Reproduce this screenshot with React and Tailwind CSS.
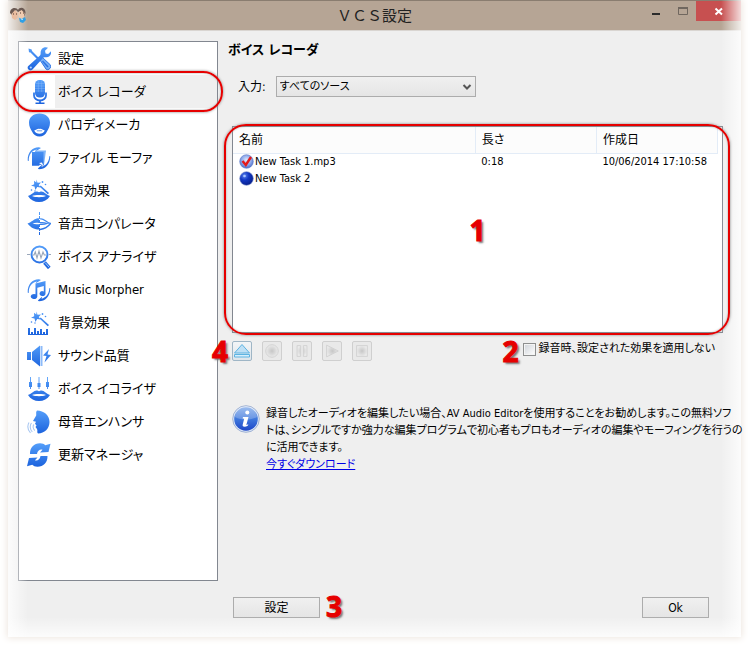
import React, { useState } from "react";

const BLUE = "url(#blue)";

const Lips = ({ y = 0 }) => (
  <g transform={`translate(0 ${y})`}>
    <path
      d="M1 17C4 16 7 12.500 9.500 12.500c1.200 0 1.800.7 2.500.7s1.300-.7 2.500-.7c2.500 0 5.500 3.500 8.500 4.500C20.500 21 16.500 23 12 23S3.500 21 1 17Z"
      fill={BLUE}
    />
    <path d="M5 17c3-1.400 11-1.400 14 0-3 1.600-11 1.600-14 0Z" fill="#fff" />
  </g>
);

const Arcs = () => (
  <g fill={BLUE}>
    <path d="M12 1.200C5.500 1 .5 6 .7 14.500c.3.8 1 .5 1-.1C1.800 8.500 5 4.500 9.800 3.500L8.500 5.600 14 2Z" />
    <path d="M12 23.300c6 0 11-4.500 11.300-12.800-.2-.9-1-.6-1 0-.3 5.500-3.300 9-7.800 10.200l.8-2.200-4.500 4Z" />
  </g>
);

const Wand = () => (
  <g fill={BLUE}>
    <path d="m9.500.5 1 3.300 3.500-.4-2.300 2.600 2 2.600-3.500-.5-1.800 3L7.500 7.600 4 6.800l3.200-1.600L7 1.700l2.300 1.800Z" />
    <path d="m12.500 7.500 1.200-1 8.300 7.500-1.200 1.200Z" />
    <circle cx="15.500" cy="3" r=".9" />
    <circle cx="18.500" cy="5.500" r=".8" />
    <circle cx="4.500" cy="11" r=".8" />
    <circle cx="8" cy="12" r=".7" />
  </g>
);

const icons = {
  tools: (
    <>
      <path d="m1.500 1.500 3.200 1L5 4l7 7-1.500 1.500-7-7-1.500-.3Z" fill={BLUE} />
      <path
        d="m13 13 2.500-2.500 8 7.500c1.500 2-1.800 6-4.300 4.300Z"
        fill="#78aff5"
        stroke={BLUE}
      />
      <path d="m15.500 14 5.500 6" stroke={BLUE} strokeWidth="1.500" />
      <path
        d="M16.500.8c1.700-.7 3.500-.5 4.500 0l-3 3 .6 2.600 2.600.6L24 4.200c.8 3-1.300 6.500-5.500 6-1 0-1.700 0-2.500.8L5.500 22.500c-2.500 2.500-6.500-.8-4.200-3.500L13 8.500c.8-.8.6-1.500.6-2.700 0-2.200 1-4.200 2.900-5Z"
        fill={BLUE}
      />
      <circle cx="3.800" cy="20.500" r="1.100" fill="#b9d7fb" />
    </>
  ),
  mic: (
    <>
      <rect x="8" y="0" width="10" height="17.500" rx="4.500" fill={BLUE} />
      <path
        d="M8.500 3.500h9M8 6h10M8 8.500h10M8 11h10M11.300 1v11M14.700 1v11"
        stroke="#8fc1fb"
        strokeWidth=".4"
      />
      <path
        d="M7 12.500v3a6 5 0 0 0 12 0v-3M13 20v3M8.500 23.300h9"
        stroke={BLUE}
        strokeWidth="1.800"
      />
    </>
  ),
  face: (
    <>
      <path
        d="M12.500.5C19 .5 23 4.500 23 9.500c0 4-1.500 6.500-3 9-1.500 3.200-4.300 5-7.500 5s-6-1.800-7.500-5c-1.500-2.500-3-5-3-9C2 4.500 6 .5 12.500.5Z"
        fill={BLUE}
      />
      <path
        d="M7.200 17.500c2-.5 3.300-2.200 5.300-1.600 2-.6 3.300 1.100 5.300 1.600-2 4.300-8.600 4.300-10.600 0Z"
        fill="#fff"
      />
      <path d="M9.800 17.800h5.400" stroke={BLUE} strokeWidth=".7" />
    </>
  ),
  file: (
    <>
      <Arcs />
      <path d="M8 4.500h11l-2 14.500H8Z" fill="#7db3f8" />
      <path d="M5 6h11.500v14L13 18.500l-1 1.300H5Z" fill={BLUE} />
      <path d="m12 17 3-.5 1.500 3.500Z" fill="#fff" />
    </>
  ),
  wandLips: (
    <>
      <Wand />
      <Lips />
    </>
  ),
  compare: (
    <>
      <path
        d="M12 6.500C9 5 5 10 .5 11.500 4 16 8 17.500 12 17.500v-5.300c-2 0-4.500.3-6.500-.7 2-.8 4.500-.8 6.500-.5Z"
        fill={BLUE}
      />
      <path
        d="M13 7c3-1.500 6.500 3.500 10.500 4.500C20.500 15.500 17 17 13 17.500M13 10.700c2-.2 5 0 7 .8-2 .8-5 1-7 .8"
        stroke={BLUE}
        strokeWidth="1.300"
      />
      <path d="M12.500 0v24" stroke={BLUE} strokeDasharray="3 1" />
    </>
  ),
  analyzer: (
    <>
      <circle cx="12.500" cy="9.500" r="8" stroke={BLUE} strokeWidth="2" />
      <path
        d="M0 9.500h3M22 9.500h2M5.500 10H7l1.300-3 1.700 6 2-7 2 7 2-6 1.300 3h2"
        stroke="#9aa7ba"
        strokeWidth="1.100"
      />
      <path d="m17.500 17.500 4.800 5.500" stroke={BLUE} strokeWidth="3.500" />
      <path d="m18.300 17.800 3.700 4.300" stroke="#9bc4f8" />
    </>
  ),
  music: (
    <>
      <Arcs />
      <path
        d="M8.500 5.500 18.500 3v12.500a3 2.400 0 1 1-1.700-2V8l-6.500 1.800v8.700a3.300 2.500 0 1 1-1.800-2.200Z"
        fill={BLUE}
      />
    </>
  ),
  background: (
    <>
      <Wand />
      <path
        d="M2 24v-7M5 24v-3M8 24v-7M11 24v-4M14 24v-6M17 24v-3M20 24v-6"
        stroke={BLUE}
        strokeWidth="2"
      />
      <path d="M1 23.500h20" stroke={BLUE} />
    </>
  ),
  sound: (
    <>
      <path d="M0 8h4v8H0ZM5 8l8-6.500v21L5 16Z" fill={BLUE} />
      <path d="M14.500 2v20" stroke="#8dbbf9" strokeWidth="2" />
      <path d="m22 5-6 6.500 3.500.5-2 6.500L24 11l-3.500-.5Z" fill={BLUE} />
    </>
  ),
  equalizer: (
    <>
      <path d="M3.500 0v12M12 0v12M20.500 0v12" stroke={BLUE} strokeWidth=".9" />
      <path d="M2 5h3v5H2ZM10.500 6h3v4h-3ZM19 5h3v5h-3Z" fill={BLUE} />
      <Lips y={1} />
    </>
  ),
  vowel: (
    <>
      <path
        d="M10 .5C17 .5 22.500 5.500 22.500 12S17.500 23.500 11 23.500c-1.500-1.500 0-3-1-4.500l-1.500-2 1-1.500L8 13.700l1-1.900-3-.8 3.200-5.500C9.500 3.500 8.500 2 10 .5Z"
        fill={BLUE}
      />
      <path
        d="M7 14.500c-1.500 1.500-1 4.500.8 6M4.500 13c-2 2.500-1.500 6.500.8 8.800M2 12.500c-2 3.500-1 7.500 1.500 10.300"
        stroke="#a9c8f2"
        strokeWidth="1.100"
      />
    </>
  ),
  update: (
    <g fill={BLUE}>
      <path d="M3 11C2.800 4.500 7 .3 13 .3c2.500 0 4 .7 5.200 1.900L23.500.8 21.500 9 13 9.500l2.500-2.800C13 6 10.500 7.500 10 11Z" />
      <path d="M20.500 13c.2 6.500-4 10.700-10 10.700-2.500 0-4-.7-5.200-1.900L0 23.200 2 15l8.500-.5L8 17.300c2.500.7 5-.8 5.500-4.300Z" />
    </g>
  ),
};

const menu = [
  { icon: "tools", title: "設定" },
  { icon: "mic", title: "ボイス レコーダ" },
  { icon: "face", title: "パロディメーカ" },
  { icon: "file", title: "ファイル モーファ" },
  { icon: "wandLips", title: "音声効果" },
  { icon: "compare", title: "音声コンパレータ" },
  { icon: "analyzer", title: "ボイス アナライザ" },
  { icon: "music", title: "Music Morpher" },
  { icon: "background", title: "背景効果" },
  { icon: "sound", title: "サウンド品質" },
  { icon: "equalizer", title: "ボイス イコライザ" },
  { icon: "vowel", title: "母音エンハンサ" },
  { icon: "update", title: "更新マネージャ" },
];

const tasks = [
  { name: "New Task 1.mp3", length: "0:18", date: "10/06/2014 17:10:58", done: true },
  { name: "New Task 2", length: "", date: "", done: false },
];

const Gradients = () => (
  <svg className="absolute size-0" aria-hidden="true">
    <defs>
      <linearGradient id="blue" gradientUnits="userSpaceOnUse" x1="0" y1="0" x2="0" y2="24">
        <stop offset="0" stopColor="#559ffa" />
        <stop offset="1" stopColor="#1b62dd" />
      </linearGradient>
      <radialGradient id="ball" cx=".35" cy=".3" r=".8">
        <stop offset="0" stopColor="#5d86ee" />
        <stop offset=".4" stopColor="#1238c4" />
        <stop offset="1" stopColor="#061a80" />
      </radialGradient>
      <radialGradient id="ballDone" cx=".5" cy=".4" r=".7">
        <stop offset="0" stopColor="#e3ebff" />
        <stop offset=".5" stopColor="#8fa9ea" />
        <stop offset="1" stopColor="#2f52b8" />
      </radialGradient>
      <linearGradient id="info" x1="0" y1="0" x2="0" y2="1">
        <stop offset="0" stopColor="#7fa9ea" />
        <stop offset=".5" stopColor="#3f78dc" />
        <stop offset="1" stopColor="#1d46c8" />
      </linearGradient>
      <radialGradient id="grey">
        <stop offset="0" stopColor="#c6c6c6" />
        <stop offset="1" stopColor="#ebebeb" />
      </radialGradient>
    </defs>
  </svg>
);

const Mark = ({ children, className = "" }) => (
  <span
    className={`z-20 font-['Open_Sans',sans-serif] text-[28px] leading-6 font-bold text-[#e60000] [text-shadow:2px_2px_2px_#777] [-webkit-text-stroke:1px_#e60000] ${className}`}
  >
    {children}
  </span>
);

const Outline = ({ className }) => (
  <div
    className={`pointer-events-none absolute z-20 border-2 border-[#e60000] shadow-[0_0_2px_1px_#99999999,inset_0_0_2px_#999999] ${className}`}
  />
);

const TitleBar = () => (
  <header className="relative flex h-[31px] items-center justify-center border-t border-b border-t-[#8a7d70] border-b-[#d9d5d1] bg-[#b6a595]">
    <svg className="absolute top-1.5 left-0.5 z-20 size-4" viewBox="0 0 16 16" aria-hidden="true">
      <path d="M0 6c0-6 7-6 8-3 2-4 8-2 7.500 3l-1 3L11 4 8 5 6 3 2 8Z" fill="#6b5a53" />
      <path d="M1.500 7 5 3l3 3-.5 5L5 13l-3-2Z" fill="#e9bda0" />
      <path d="m8.500 5 3-2 3 3-.5 4-3 2-2.500-3Z" fill="#f0cbb0" />
      <path d="M3 7h1M6 7h1M10 6h1M13 6h1" stroke="#523b33" />
      <path d="m9 11 3 1 3-2 1 3-3 3-3-1Z" fill="#2fa0e6" />
      <path d="m11 12 2 .5" stroke="#b7e5ff" />
    </svg>
    <h1 className="text-[15px] leading-5 text-[#222] [font-feature-settings:normal]">ＶＣＳ設定</h1>
    <div className="absolute top-0 right-0 flex">
      <button type="button" aria-label="最小化" className="h-5 w-7">
        <svg width="28" height="20" viewBox="0 0 28 20" aria-hidden="true">
          <path d="M12 13h8" stroke="#2b2b2b" strokeWidth="2" />
        </svg>
      </button>
      <button type="button" aria-label="最大化" className="h-5 w-7">
        <svg width="28" height="20" viewBox="0 0 28 20" aria-hidden="true">
          <path d="M10 7h10" stroke="#70675f" strokeWidth="2" />
          <path d="M10.500 6.500h9v7h-9Z" fill="none" stroke="#70675f" />
        </svg>
      </button>
      <button type="button" aria-label="閉じる" className="h-5 w-[45px] bg-[#c75050]">
        <svg width="45" height="20" viewBox="0 0 45 20" aria-hidden="true">
          <path d="m19.500 7.500 6.500 6m0-6-6.500 6" stroke="#fff" strokeWidth="2" />
        </svg>
      </button>
    </div>
  </header>
);

const Sidebar = ({ active, onSelect }) => (
  <nav className="w-[200px] shrink-0 border border-[#828790] bg-white">
    <ul>
      {menu.map((item) => (
        <li key={item.icon} className="relative">
          <button
            type="button"
            aria-current={active === item.icon ? "page" : undefined}
            className="flex h-[33px] w-full items-center pl-2 text-left text-[13px]"
            onClick={() => onSelect(item.icon)}
          >
            <svg className="mr-1 size-6 shrink-0" viewBox="0 0 24 24" fill="none" aria-hidden="true">
              {icons[item.icon]}
            </svg>
            <span
              className={`flex h-full flex-1 items-center pl-[3px] whitespace-nowrap ${
                active === item.icon ? "bg-[#efefef]" : ""
              }`}
            >
              {item.title}
            </span>
          </button>
          {item.icon === "mic" && <Outline className="-inset-x-1.5 -top-1 -bottom-1 rounded-[20px]" />}
        </li>
      ))}
    </ul>
  </nav>
);

const TaskIcon = ({ done }) => (
  <svg className="size-4 shrink-0" viewBox="0 0 16 16" fill="none" aria-hidden="true">
    <circle cx="7.500" cy="7.500" r="6.800" fill={done ? "url(#ballDone)" : "url(#ball)"} stroke={done ? "#5a78c8" : "#7389c7"} strokeWidth=".6" />
    {done ? (
      <path d="m3.500 7 3.300 4L12 3" stroke="#e51a1a" strokeWidth="2.400" />
    ) : (
      <circle cx="5.500" cy="5" r="1.300" fill="#a9c6ff" />
    )}
  </svg>
);

const TaskTable = () => (
  <div className="relative">
    <div className="min-h-[207px] border border-[#828790] bg-white pr-1">
      <table className="w-full table-fixed border-collapse text-left text-[11px]">
        <thead>
          <tr className="h-[26px] border-b border-[#e3ecf7] bg-[#fcfcfc] text-xs">
            <th className="w-1/2 border-r border-[#e3ecf7] pl-1.5 font-normal">名前</th>
            <th className="w-1/4 border-r border-[#e3ecf7] pl-1.5 font-normal">長さ</th>
            <th className="w-1/4 border-r border-[#e3ecf7] pl-1.5 font-normal">作成日</th>
          </tr>
        </thead>
        <tbody>
          {tasks.map((task) => (
            <tr key={task.name} className="h-[17px]">
              <td className="p-0 pl-1.5">
                <div className="flex h-[17px] items-center whitespace-nowrap">
                  <TaskIcon done={task.done} />
                  {task.name}
                </div>
              </td>
              <td className="p-0 pl-1.5">{task.length}</td>
              <td className="p-0 pl-1.5 whitespace-nowrap">{task.date}</td>
            </tr>
          ))}
        </tbody>
      </table>
    </div>
    <Outline className="-inset-y-0.5 -right-[7px] -left-2 rounded-[22px]" />
    <Mark className="absolute top-1/2 left-1/2 -translate-x-1/2 -translate-y-1/2">1</Mark>
  </div>
);

const controls = [
  { label: "録音", shape: <circle cx="10" cy="10" r="7" /> },
  { label: "一時停止", shape: <path d="M4.500 4h4v12h-4ZM11.500 4h4v12h-4Z" /> },
  { label: "再生", shape: <path d="M4 3.500 17 10 4 16.500Z" /> },
  { label: "停止", shape: <path d="M4 4h12v12H4Z" /> },
];

const Toolbar = () => (
  <div className="relative flex gap-2.5">
    <Mark className="absolute -top-0.5 -left-5">4</Mark>
    <button
      type="button"
      aria-label="開く"
      className="size-5 rounded-xs border border-[#9fb6c6] bg-linear-to-b from-[#f3f5f7] to-[#dfe5ea]"
    >
      <svg width="18" height="18" viewBox="0 0 18 18" aria-hidden="true">
        <path d="m9 2.500 7.500 8.500h-15Z" fill="#bfe0f5" stroke="#5db3e2" />
        <path d="M1.500 12.500h15V15h-15Z" fill="#d7effc" stroke="#5db3e2" />
      </svg>
    </button>
    {controls.map((control) => (
      <button
        key={control.label}
        type="button"
        disabled
        aria-label={control.label}
        className="size-5 rounded-xs border border-[#cfcfcf] bg-[#e9e9e9]"
      >
        <svg width="18" height="18" viewBox="0 0 20 20" fill="url(#grey)" stroke="#d0d0d0" aria-hidden="true">
          {control.shape}
        </svg>
      </button>
    ))}
  </div>
);

const InfoNote = () => (
  <section className="relative z-20 flex gap-1.5">
    <svg className="size-7 shrink-0" viewBox="0 0 28 28" aria-hidden="true">
      <circle cx="14" cy="14" r="13.300" fill="#dce7f8" stroke="#8299c4" strokeWidth=".7" />
      <circle cx="14" cy="14" r="11.800" fill="url(#info)" />
      <path d="M3 12a11 11 0 0 1 22 0c-5 3-15 4-22 0Z" fill="#fff" opacity=".22" />
      <circle cx="15.300" cy="7.500" r="2" fill="#fff" />
      <path d="M11 12h5.500L14.300 20l2-.7-.3 1.200c-3 2-6 1.500-5.300-1l1.500-5.700-1.600-.4Z" fill="#fff" />
    </svg>
    <div className="text-[11px] leading-[17px] whitespace-nowrap">
      <p>
        録音したオーディオを編集したい場合、AV Audio Editorを使用することをお勧めします。この無料ソフ
        <br />
        トは、シンプルですか強力な編集プログラムで初心者もプロもオーディオの編集やモーフィングを行うの
        <br />
        に活用できます。
      </p>
      <a href="#download" className="text-[#0000e6] underline">
        今すぐダウンロード
      </a>
    </div>
  </section>
);

const App = () => {
  const [active, setActive] = useState("mic");
  const [skipEffects, setSkipEffects] = useState(false);

  return (
    <div className="flex min-h-screen flex-col bg-white pr-[7px] pb-2 pl-2 font-['DejaVu_Sans_Condensed','Noto_Sans_CJK_JP',sans-serif] text-black [font-feature-settings:'palt']">
      <Gradients />
      <div className="relative flex flex-1 flex-col bg-[#efefef] shadow-[0_0_7px_1px_#eee6df]">
        <TitleBar />
        <div className="flex flex-1 gap-2.5 pt-2.5 pr-[18px] pl-2.5">
          <Sidebar active={active} onSelect={setActive} />
          <main className="min-w-0 flex-1">
            <h2 className="text-[13px] leading-[18px] font-bold">ボイス レコーダ</h2>
            <div className="pt-[17px] pl-1">
              <div className="flex items-center gap-2.5 pl-1.5 text-xs">
                <label htmlFor="source">入力:</label>
                <div className="relative w-[200px]">
                  <select
                    id="source"
                    className="block h-[21px] w-full appearance-none border border-[#acacac] bg-linear-to-b from-[#f0f0f0] to-[#e5e5e5] pt-0.5 pl-[3px] text-[11px]"
                  >
                    <option>すべてのソース</option>
                  </select>
                  <svg className="pointer-events-none absolute top-1.5 right-1 size-2.5" viewBox="0 0 10 10" fill="none" aria-hidden="true">
                    <path d="m1.500 3 3.500 3.500L8.500 3" stroke="#555" strokeWidth="2" />
                  </svg>
                </div>
              </div>
              <div className="mt-[29px]">
                <TaskTable />
              </div>
              <div className="mt-2 flex justify-between pr-2">
                <Toolbar />
                <div className="flex items-start gap-1">
                  <Mark className="-mt-0.5">2</Mark>
                  <label className="flex items-center gap-[3px] text-[11px] leading-4">
                    <input
                      type="checkbox"
                      checked={skipEffects}
                      onChange={(e) => setSkipEffects(e.target.checked)}
                      className="size-[13px] appearance-none border border-[#8e8f8f] bg-linear-to-br from-[#cfd3d9] to-white shadow-[inset_0_0_0_1px_#f4f4f4] checked:bg-[#3f78dc]"
                    />
                    録音時、設定された効果を適用しない
                  </label>
                </div>
              </div>
              <div className="mt-[42px]">
                <InfoNote />
              </div>
            </div>
          </main>
        </div>
        <footer className="flex items-center justify-between pt-4 pr-8 pb-[19px] pl-[225px] text-xs">
          <div className="flex items-center gap-1.5">
            <button type="button" className="h-[21px] w-[87px] border border-[#acacac] bg-linear-to-b from-[#f0f0f0] to-[#e5e5e5]">
              設定
            </button>
            <Mark className="-mt-2 -mb-1">3</Mark>
          </div>
          <button type="button" className="h-[21px] w-[67px] border border-[#acacac] bg-linear-to-b from-[#f0f0f0] to-[#e5e5e5]">
            Ok
          </button>
        </footer>
        <div className="pointer-events-none absolute inset-y-0 left-0 z-10 w-5 bg-linear-to-r from-white/80 to-transparent" />
        <div className="pointer-events-none absolute inset-y-0 right-0 z-10 w-5 bg-linear-to-l from-white/80 to-transparent" />
        <div className="pointer-events-none absolute inset-x-0 bottom-0 z-10 h-5 bg-linear-to-t from-white/80 to-transparent" />
      </div>
    </div>
  );
};

export default App;
